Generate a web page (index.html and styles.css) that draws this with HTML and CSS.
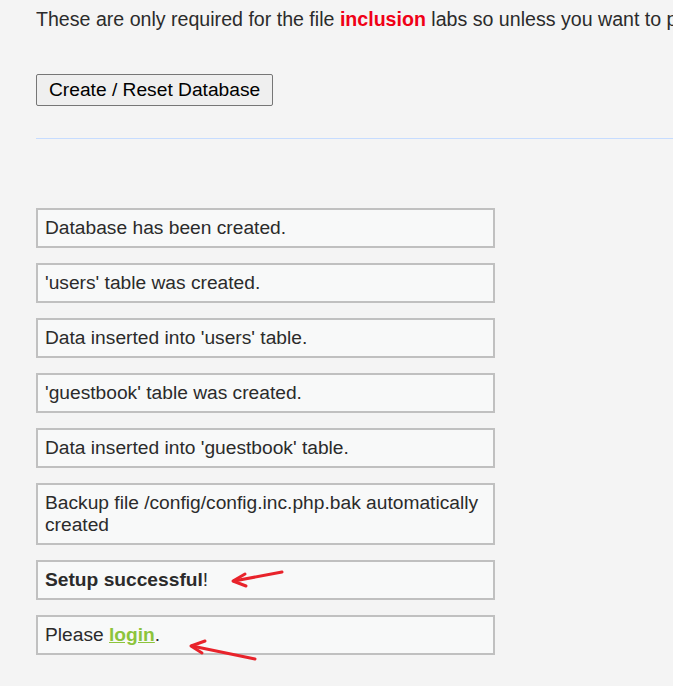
FILE: index.html
```html
<!DOCTYPE html>
<html>
<head>
<meta charset="utf-8">
<link rel="stylesheet" href="styles.css">
</head>
<body>
<div class="page">
  <p class="intro">These are only required for the file <span class="hl">inclusion</span> labs so unless you want to play with those, you can skip this.</p>
  <form class="form"><button type="button" class="btn">Create / Reset Database</button></form>
  <hr class="rule">
  <div class="messages">
    <div class="msg">Database has been created.</div>
    <div class="msg">'users' table was created.</div>
    <div class="msg">Data inserted into 'users' table.</div>
    <div class="msg">'guestbook' table was created.</div>
    <div class="msg">Data inserted into 'guestbook' table.</div>
    <div class="msg">Backup file /config/config.inc.php.bak automatically created</div>
    <div class="msg"><strong>Setup successful</strong>!</div>
    <div class="msg">Please <a class="login" href="#">login</a>.</div>
  </div>
</div>
<svg class="arrows" width="673" height="686" viewBox="0 0 673 686">
  <g fill="none" stroke="#e8232b" stroke-width="3" stroke-linecap="round" stroke-linejoin="round">
    <path d="M282 572 L234 581"/>
    <path d="M245 574 L233 581 L246 586"/>
    <path d="M255 659 L192 646"/>
    <path d="M205 641 L191 646 L202 653"/>
  </g>
</svg>
</body>
</html>
```
FILE: styles.css
```css
html, body {
  margin: 0;
  padding: 0;
  background: #f4f4f4;
}
body {
  font-family: "Liberation Sans", Arial, sans-serif;
  font-size: 19.2px;
  line-height: 22px;
  color: #2b2b2b;
  overflow: hidden;
  width: 673px;
  height: 686px;
  position: relative;
}
.page {
  padding: 8px 0 0 36px;
}
.intro {
  margin: 0;
  font-size: 19.6px;
  white-space: nowrap;
  overflow: hidden;
}
.hl {
  color: #f00016;
  font-weight: bold;
}
.form {
  margin: 44px 0 0 0;
}
.btn {
  font-family: "Liberation Sans", Arial, sans-serif;
  font-size: 19.2px;
  line-height: 22px;
  color: #000;
  background: #efefef;
  border: 1px solid #767676;
  border-radius: 2px;
  padding: 4px 12px;
  margin: 0;
}
.rule {
  margin: 32px 0 0 0;
  border: 0;
  height: 1px;
  background: #c6dcff;
}
.messages {
  margin-top: 69px;
  display: flex;
  flex-direction: column;
  gap: 15px;
  width: 459px;
}
.msg {
  box-sizing: border-box;
  background: #f8f9f9;
  border: 2px solid #c0c0c0;
  padding: 7px 2px 7px 7px;
}
.msg strong {
  font-weight: bold;
}
.login {
  color: #8cc43c;
  font-weight: bold;
  text-decoration: underline;
}
.arrows {
  position: absolute;
  left: 0;
  top: 0;
  pointer-events: none;
}
```
